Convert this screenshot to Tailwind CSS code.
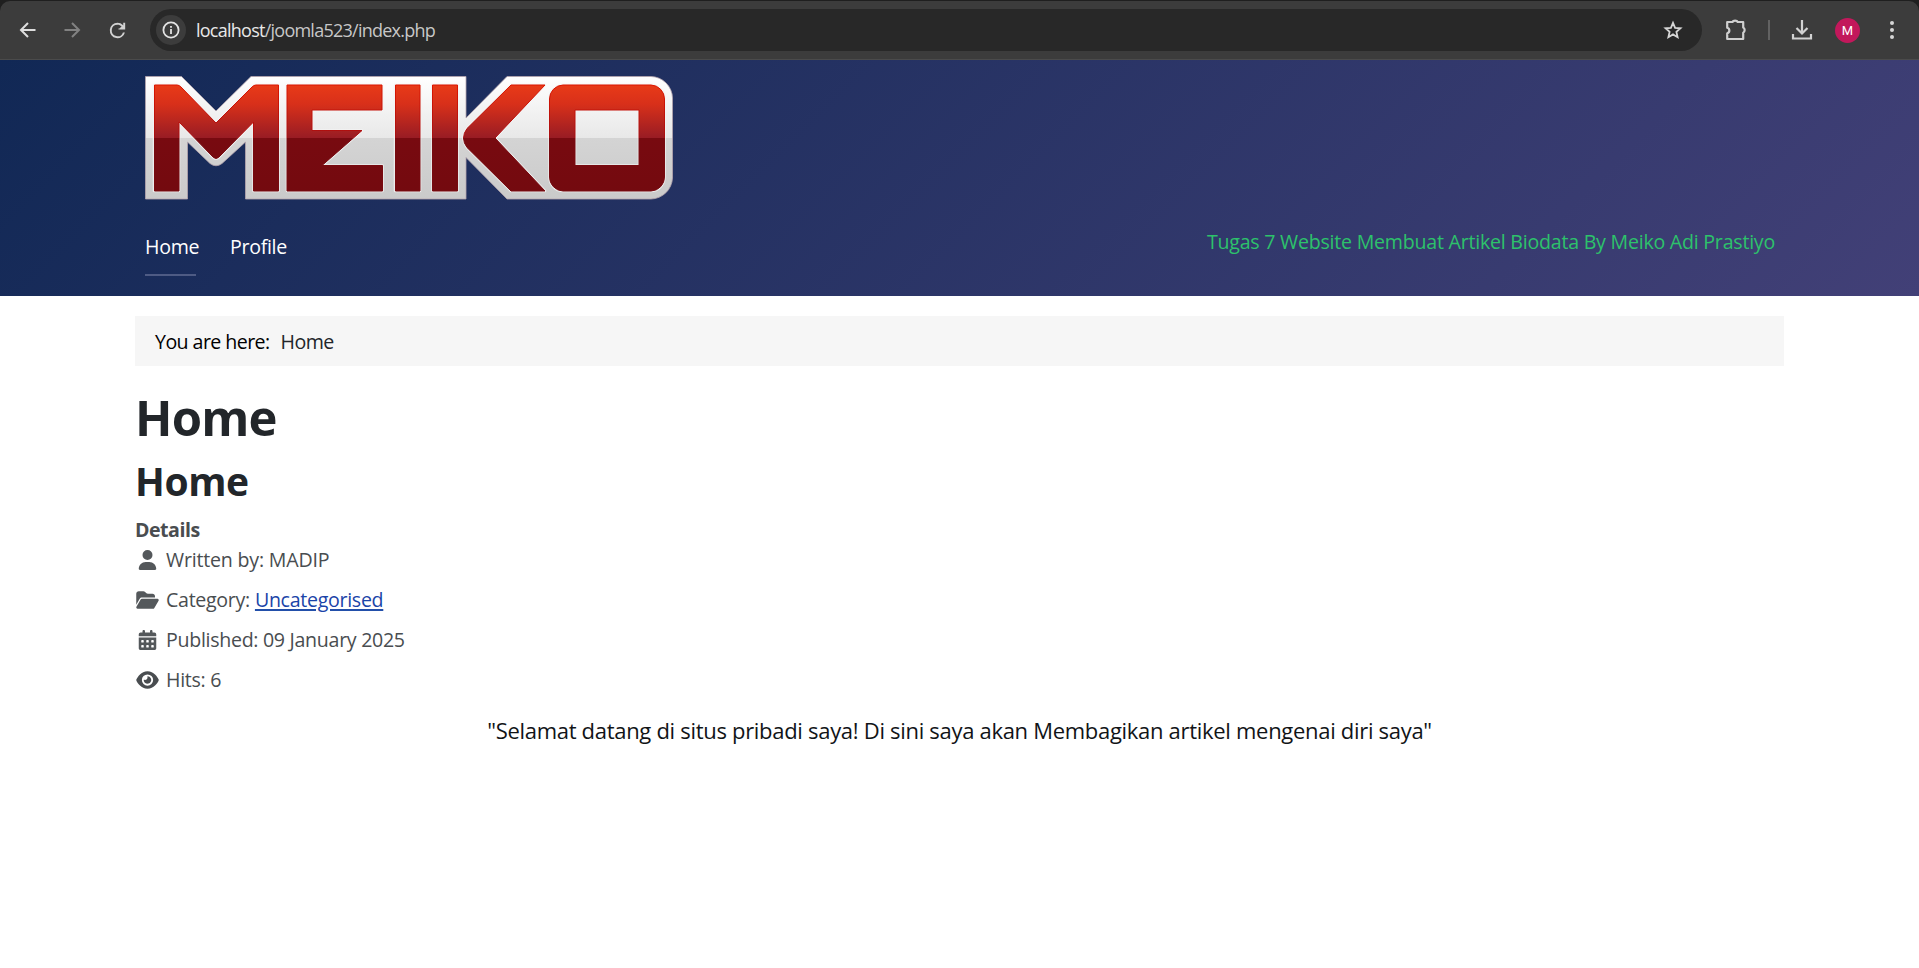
<!DOCTYPE html>
<html lang="id">
<head>
<meta charset="utf-8">
<title>Home</title>
<script src="https://cdn.jsdelivr.net/npm/@tailwindcss/browser@4"></script>
</head>
<body class="w-[1919px] h-[968px] overflow-hidden bg-white font-['Open_Sans','Noto_Sans',sans-serif] text-[19.6px] leading-[30px] text-[#22262a]">
<div class="bg-[#1f1f1f] h-[60px] pt-px">
  <nav class="h-[59px] rounded-t-[10px] bg-[#3c3c3c] border-b border-[#4b4b4b] flex items-center">
    <svg class="ml-[16px] w-6 h-6 shrink-0" viewBox="0 0 24 24" fill="none" stroke="#dedede" stroke-width="2"><path d="M19.500 12H5M12 5l-7 7 7 7"/></svg>
    <svg class="ml-[20px] w-6 h-6 shrink-0" viewBox="0 0 24 24" fill="none" stroke="#828282" stroke-width="2"><path d="M4.500 12h14.500M12 5l7 7-7 7"/></svg>
    <svg class="ml-[22px] w-[23px] h-[23px] shrink-0" viewBox="0 0 24 24" fill="#d2d2d2"><path d="M17.65 6.35A7.96 7.96 0 0 0 12 4a8 8 0 1 0 7.73 10h-2.08A6 6 0 1 1 12 6c1.66 0 3.14.69 4.22 1.78L14 10h-1v1h7V4h-2v2.700z"/></svg>
    <div class="ml-[21px] w-[1552px] h-[42px] rounded-full bg-[#282828] flex items-center shrink-0">
      <div class="ml-[6px] size-[30px] rounded-full bg-[#3c3c3c] flex items-center justify-center">
        <svg class="size-[18px]" viewBox="0 0 18 18" fill="none" stroke="#e3e3e3" stroke-width="1.8"><circle cx="9" cy="9" r="7.6"/><path d="M9 8v5M9 5v1.8"/></svg>
      </div>
      <div class="ml-[10px] grow text-[18px] tracking-[-0.75px] text-[#c7c7c7] whitespace-nowrap"><span class="text-[#e8e8e8]">localhost</span>/joomla523/index.php</div>
      <svg class="mr-[17px] w-6 h-6" viewBox="0 0 24 24" fill="none" stroke="#d6d6d6" stroke-width="1.8"><path d="M12 4.800l2.100 5 5.400.5-4.100 3.600 1.200 5.300L12 16.400l-4.600 2.800 1.200-5.300-4.100-3.600 5.400-.5z"/></svg>
    </div>
    <svg class="ml-[21px] w-[26px] h-[26px] shrink-0" viewBox="0 0 26 26"><path d="M4.200 5h5.300a2.700 2 0 0 1 5.200 0h5.500v5.500a2.300 2.800 0 0 1 0 5.200v6.300H4.200v-5.600a2.900 2.900 0 0 0 0-5.600z" fill="none" stroke="#cfcfcf" stroke-width="2.200" stroke-linejoin="round"/></svg>
    <div class="ml-[19px] w-[2px] h-[20px] bg-[#626262] shrink-0"></div>
    <svg class="ml-[20px] w-[24px] h-[24px] shrink-0" viewBox="0 0 24 24" fill="none" stroke="#d2d2d2" stroke-width="2.200"><path d="M12 2v13M6.500 10l5.500 5.500 5.500-5.500M3 16v4.500h18V16"/></svg>
    <div class="ml-[21px] size-[25px] rounded-full bg-[#c2185b] text-white text-[13px] leading-[25px] text-center font-['Roboto',sans-serif] shrink-0">M</div>
    <svg class="ml-[26px] w-[12px] h-6 shrink-0" viewBox="0 0 12 24" fill="#d6d6d6"><circle cx="6" cy="5" r="2"/><circle cx="6" cy="12" r="2"/><circle cx="6" cy="19" r="2"/></svg>
  </nav>
</div>
<header class="h-[236px] bg-[linear-gradient(135deg,#112855_0%,#424077_100%)] pl-[145px] pr-[144px] pt-[15px] text-white">
  <svg class="block w-[530px] h-[126px]" viewBox="145 75 530 126" role="img" aria-label="MEIKO">
    <defs>
      <linearGradient id="plate" gradientUnits="userSpaceOnUse" x1="0" y1="76" x2="0" y2="200"><stop offset="0" stop-color="#fff"/><stop offset=".5" stop-color="#e8e8e8"/><stop offset=".5" stop-color="#d4d4d4"/><stop offset="1" stop-color="#cacaca"/></linearGradient>
      <linearGradient id="red" gradientUnits="userSpaceOnUse" x1="0" y1="85" x2="0" y2="191"><stop offset="0" stop-color="#e83a18"/><stop offset=".18" stop-color="#d8301a"/><stop offset=".5" stop-color="#981c24"/><stop offset=".5" stop-color="#780a10"/><stop offset="1" stop-color="#740a0f"/></linearGradient>
      <linearGradient id="edge" gradientUnits="userSpaceOnUse" x1="0" y1="85" x2="0" y2="191"><stop offset="0" stop-color="#dc1500"/><stop offset=".5" stop-color="#a80f12"/><stop offset=".5" stop-color="#780a10"/></linearGradient>
    </defs>
    <path fill="url(#plate)" stroke="#b5a5ad" stroke-width=".8" d="M145.500 76.500H181.500L216 111L251 76.500H466V118L507 76.500H651A22 22 0 0 1 672.500 98V178A22 22 0 0 1 651 199H507L466 157.500V199H245.500V142L222 163.500Q216 168 210 163.500L187.500 142V199H145.500Z"/>
    <g fill="url(#red)" stroke-linejoin="round">
      <g stroke="#f4f4f4" stroke-opacity=".8" stroke-width="2.600">
        <path d="M154 85H177Q179 85 181 87L216 123L252 87Q254 85 256 85H278.500V191H253.500V122L219 157Q216 160 213 157L179 122V191H154Z"/><path d="M287 85H382V110H312V130.500H362L322 165.500H382.500V191H287Z"/><path d="M395 85H420V191H395Z"/><path d="M432.500 85H457.500V191H432.500Z"/><path d="M511 85H545L495 138L545 191H511L467 147.500Q460 138 467 128.500Z"/><path fill-rule="evenodd" d="M563 85H651A14 14 0 0 1 664.500 99V177A14 14 0 0 1 651 191H563A14 14 0 0 1 549.500 177V99A14 14 0 0 1 563 85ZM575 110V165.500H639V110Z"/>
      </g>
      <g stroke="url(#edge)" stroke-width="1">
        <path d="M154.500 85H177Q179 85 181 87L216 123L252 87Q254 85 256 85H278.500V191H253.500V122L219 157Q216 160 213 157L179 122V191H154.500Z"/><path d="M287 85H382V110H312V130.500H362L322 165.500H382.500V191H287Z"/><path d="M395.500 85H420V191H395.500Z"/><path d="M432.500 85H457.500V191H432.500Z"/><path d="M511 85H545L495 138L545 191H511L467 147.500Q460 138 467 128.500Z"/><path fill-rule="evenodd" d="M563 85H651A14 14 0 0 1 664.500 99V177A14 14 0 0 1 651 191H563A14 14 0 0 1 549.500 177V99A14 14 0 0 1 563 85ZM575 110V165.500H639V110Z"/>
      </g>
    </g>
  </svg>
  <div class="flex justify-between">
    <div class="flex gap-[31px] pt-[31px] tracking-[-0.3px]">
      <div class="w-[54px] whitespace-nowrap">Home<div class="mt-[12px] w-[51px] h-[2px] bg-[#4e5b84]"></div></div>
      <span class="whitespace-nowrap">Profile</span>
    </div>
    <div class="pt-[26px] text-[#2dc26b] tracking-[-0.235px] whitespace-nowrap">Tugas 7 Website Membuat Artikel Biodata By Meiko Adi Prastiyo</div>
  </div>
</header>
<main class="mx-[135px] pt-[20px]">
  <div class="h-[50px] bg-[#f6f6f6] pl-[20px] pt-[11px] flex gap-[11px] tracking-[-0.57px]"><span class="text-black">You are here:</span><span>Home</span></div>
  <h1 class="mt-[21px] text-[49px] leading-[60px] font-bold tracking-[-0.8px]">Home</h1>
  <h2 class="mt-[10px] text-[39px] leading-[48px] font-bold tracking-[-0.4px]">Home</h2>
  <div class="mt-[10px] text-[#494d50] tracking-[-0.3px]">
    <div class="font-bold tracking-[-0.5px]">Details</div>
    <div class="flex flex-col gap-[10px]">
      <div class="flex items-center"><svg class="w-[25px] h-[20px] mr-[6px]" viewBox="-96 0 640 512" fill="#54585b"><path d="M224 256A128 128 0 1 0 224 0a128 128 0 1 0 0 256zm-45.700 48C79.800 304 0 383.800 0 482.300C0 498.700 13.300 512 29.700 512H418.300c16.400 0 29.700-13.300 29.700-29.700C448 383.800 368.200 304 269.700 304H178.300z"/></svg><span class="tracking-[-0.2px]">Written by: MADIP</span></div>
      <div class="flex items-center"><svg class="w-[25px] h-[20px] mr-[6px]" viewBox="-32 0 640 512" fill="#54585b"><path d="M88.700 223.800L0 375.800V96C0 60.700 28.700 32 64 32H181.500c17 0 33.300 6.700 45.300 18.700l26.500 26.500c12 12 28.300 18.700 45.300 18.700H416c35.300 0 64 28.700 64 64v32H144c-22.800 0-43.800 12.100-55.300 31.800zm27.600 16.100C122.100 230 132.600 224 144 224H544c11.500 0 22 6.100 27.700 16.100s5.700 22.200-.1 32.100l-112 192C453.900 474 443.400 480 432 480H32c-11.500 0-22-6.100-27.700-16.100s-5.700-22.200 .1-32.100l112-192z"/></svg><span class="mr-[5px]">Category:</span><span class="text-[#1a44a8] underline decoration-[#224faa] decoration-[2px] underline-offset-[2px]">Uncategorised</span></div>
      <div class="flex items-center"><svg class="w-[25px] h-[20px] mr-[6px]" viewBox="-96 0 640 512" fill="#54585b"><path d="M128 0c17.700 0 32 14.300 32 32V64H288V32c0-17.700 14.300-32 32-32s32 14.300 32 32V64h48c26.500 0 48 21.500 48 48v48H0V112C0 85.500 21.500 64 48 64H96V32c0-17.700 14.300-32 32-32zM0 192H448V464c0 26.500-21.500 48-48 48H48c-26.500 0-48-21.500-48-48V192zm64 80v32c0 8.800 7.200 16 16 16h32c8.800 0 16-7.200 16-16V272c0-8.800-7.200-16-16-16H80c-8.800 0-16 7.200-16 16zm128 0v32c0 8.800 7.200 16 16 16h32c8.800 0 16-7.200 16-16V272c0-8.800-7.200-16-16-16H208c-8.800 0-16 7.200-16 16zm144-16c-8.800 0-16 7.200-16 16v32c0 8.800 7.200 16 16 16h32c8.800 0 16-7.200 16-16V272c0-8.800-7.200-16-16-16H336zM64 400v32c0 8.800 7.200 16 16 16h32c8.800 0 16-7.200 16-16V400c0-8.800-7.200-16-16-16H80c-8.800 0-16 7.200-16 16zm144-16c-8.800 0-16 7.200-16 16v32c0 8.800 7.200 16 16 16h32c8.800 0 16-7.200 16-16V400c0-8.800-7.200-16-16-16H208zm112 16v32c0 8.800 7.200 16 16 16h32c8.800 0 16-7.200 16-16V400c0-8.800-7.200-16-16-16H336c-8.800 0-16 7.200-16 16z"/></svg><span>Published: 09 January 2025</span></div>
      <div class="flex items-center"><svg class="w-[25px] h-[20px] mr-[6px]" viewBox="-32 0 640 512" fill="#494d50"><path d="M288 32c-80.800 0-145.500 36.800-192.600 80.600C48.600 156 17.300 208 2.500 243.700c-3.300 7.900-3.300 16.700 0 24.600C17.300 304 48.600 356 95.400 399.400C142.500 443.200 207.200 480 288 480s145.500-36.800 192.600-80.600c46.800-43.500 78.100-95.400 93-131.100c3.300-7.900 3.300-16.700 0-24.600c-14.900-35.700-46.200-87.700-93-131.100C433.500 68.800 368.800 32 288 32zM144 256a144 144 0 1 1 288 0 144 144 0 1 1 -288 0zm144-64c0 35.300-28.700 64-64 64c-7.100 0-13.900-1.200-20.300-3.300c-5.500-1.800-11.900 1.600-11.700 7.400c.3 6.900 1.300 13.800 3.200 20.700c13.700 51.200 66.400 81.600 117.600 67.900s81.600-66.400 67.900-117.600c-11.100-41.500-47.800-69.400-88.600-71.100c-5.800-.2-9.200 6.100-7.400 11.700c2.100 6.400 3.300 13.200 3.300 20.300z"/></svg><span>Hits: 6</span></div>
    </div>
  </div>
  <p class="mt-[17px] text-center text-[22px] leading-[36px] tracking-[-0.3px] text-[#111417]">"Selamat datang di situs pribadi saya! Di sini saya akan Membagikan artikel mengenai diri saya"</p>
</main>
</body>
</html>
